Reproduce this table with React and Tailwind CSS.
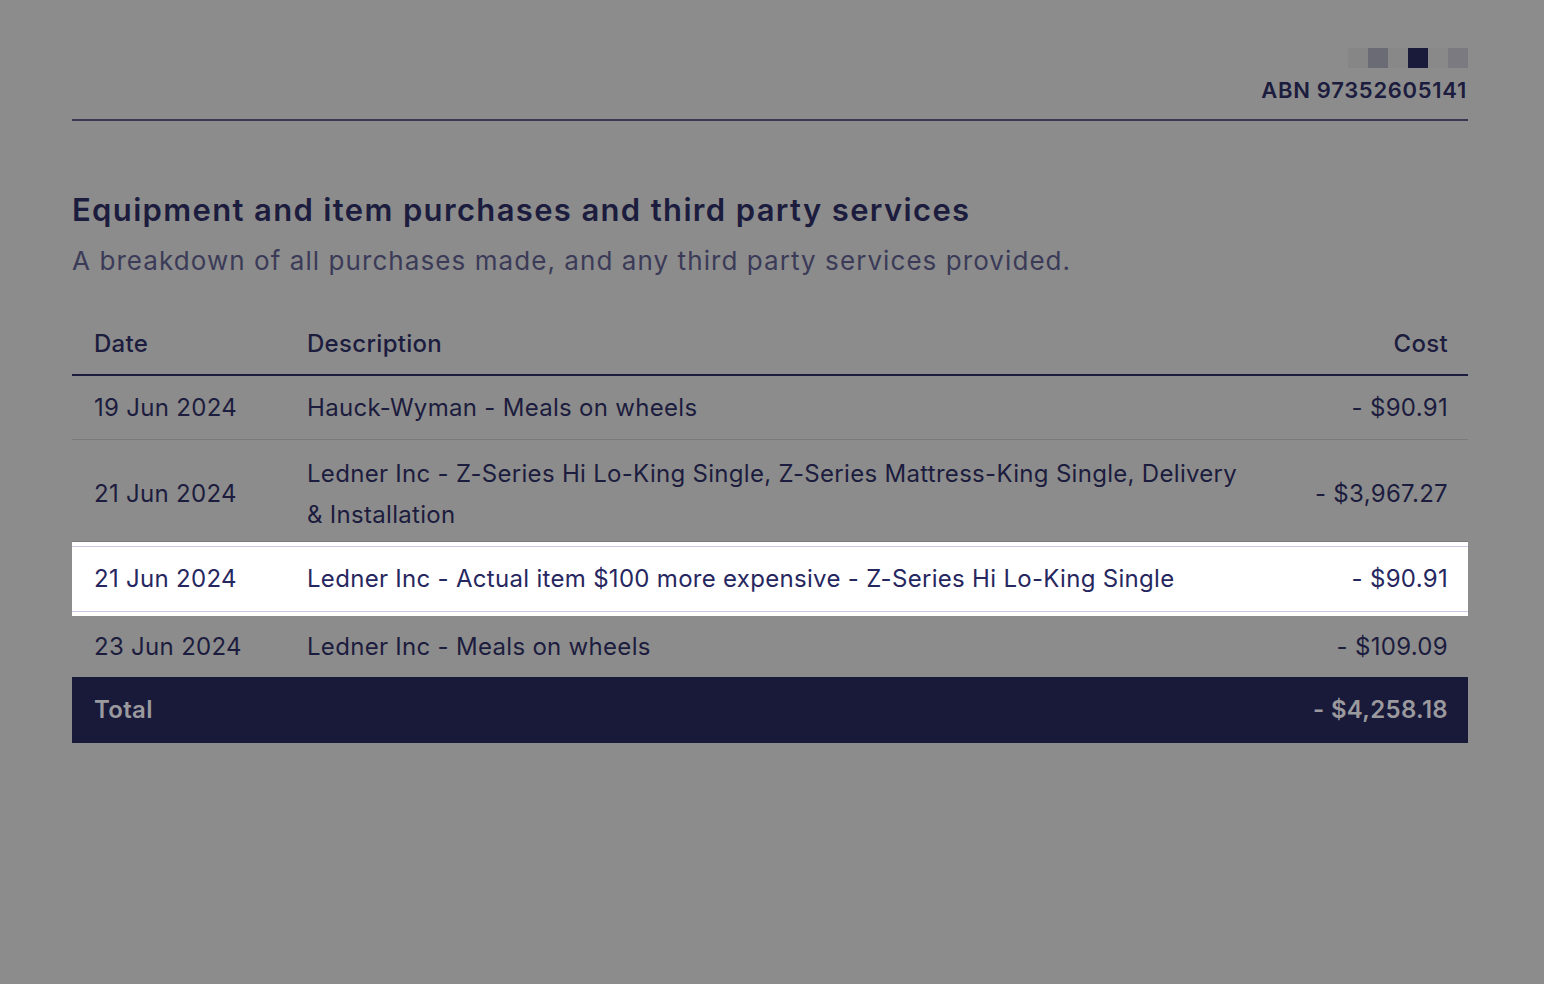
import React from "react";

const rows = [
  { date: "19 Jun 2024", desc: "Hauck-Wyman - Meals on wheels", cost: "- $90.91" },
  {
    date: "21 Jun 2024",
    desc: "Ledner Inc - Z-Series Hi Lo-King Single, Z-Series Mattress-King Single, Delivery & Installation",
    cost: "- $3,967.27",
    wrap: true,
  },
  {
    date: "21 Jun 2024",
    desc: "Ledner Inc - Actual item $100 more expensive - Z-Series Hi Lo-King Single",
    cost: "- $90.91",
    active: true,
  },
  { date: "23 Jun 2024", desc: "Ledner Inc - Meals on wheels", cost: "- $109.09", last: true },
];

function Logo() {
  const cells = ["bg-[#868686]", "bg-[#6b6b75]", "bg-[#888888]", "bg-[#1a1a3a]", "bg-[#898989]", "bg-[#7a7a80]"];
  return (
    <div className="flex">
      {cells.map((c, i) => (
        <div key={i} className={`h-5 w-5 ${c}`} />
      ))}
    </div>
  );
}

function Row({ row }) {
  if (row.active) {
    return (
      <div className="bg-white py-1">
        <div className="grid grid-cols-[213px_975px_1fr] items-center border-y border-[#c9c9e3] h-[66px] text-[#27275f]">
          <div className="pl-[22px]">{row.date}</div>
          <div className="pl-[22px] pr-[8px]">{row.desc}</div>
          <div className="pr-5 text-right">{row.cost}</div>
        </div>
      </div>
    );
  }
  if (row.wrap) {
    return (
      <div className="grid grid-cols-[213px_975px_1fr] items-center border-b border-[#7a7a7a] h-[102px] pt-[8px] pb-[2px]">
        <div className="pl-[22px]">{row.date}</div>
        <div className="pl-[22px] pr-[8px] leading-[41px]">{row.desc}</div>
        <div className="pr-5 text-right">{row.cost}</div>
      </div>
    );
  }
  return (
    <div
      className={`grid grid-cols-[213px_975px_1fr] items-center ${
        row.last ? "h-[61px]" : "h-[64px] border-b border-[#7a7a7a]"
      }`}
    >
      <div className="pl-[22px]">{row.date}</div>
      <div className="pl-[22px] pr-[8px]">{row.desc}</div>
      <div className="pr-5 text-right">{row.cost}</div>
    </div>
  );
}

export default function App() {
  return (
    <div
      className="min-h-screen bg-[#8c8c8c] text-[#1c1c3e]"
      style={{ fontFamily: "Inter, 'Noto Sans', sans-serif" }}
    >
      <div className="ml-[72px] w-[1396px] pt-12">
        <div className="flex flex-col items-end">
          <Logo />
          <div className="mt-[9px] text-[22px] font-semibold leading-[26px] tracking-[0.7px] pr-px">ABN 97352605141</div>
        </div>
        <div className="mt-[16px] h-[2px] bg-[#383852]" />

        <h1 className="mt-[69px] text-[31px] font-semibold leading-[40px] tracking-[1.35px]">
          Equipment and item purchases and third party services
        </h1>
        <p className="mt-[14px] text-[26px] leading-[34px] text-[#3b3b58] tracking-[1.07px]">
          A breakdown of all purchases made, and any third party services provided.
        </p>

        <div className="mt-[39px] text-[24px] tracking-[0.3px]">
          <div className="grid grid-cols-[213px_975px_1fr] items-center border-b-2 border-[#1c1c3e] h-[59px] pb-1 font-medium">
            <div className="pl-[22px]">Date</div>
            <div className="px-[22px]">Description</div>
            <div className="pr-5 text-right">Cost</div>
          </div>
          {rows.map((r, i) => (
            <Row key={i} row={r} />
          ))}
          <div className="grid grid-cols-[213px_975px_1fr] items-center h-[66px] bg-[#19193a] text-[#9a9a9e] font-semibold">
            <div className="pl-[22px]">Total</div>
            <div />
            <div className="pr-5 text-right">- $4,258.18</div>
          </div>
        </div>
      </div>
    </div>
  );
}
